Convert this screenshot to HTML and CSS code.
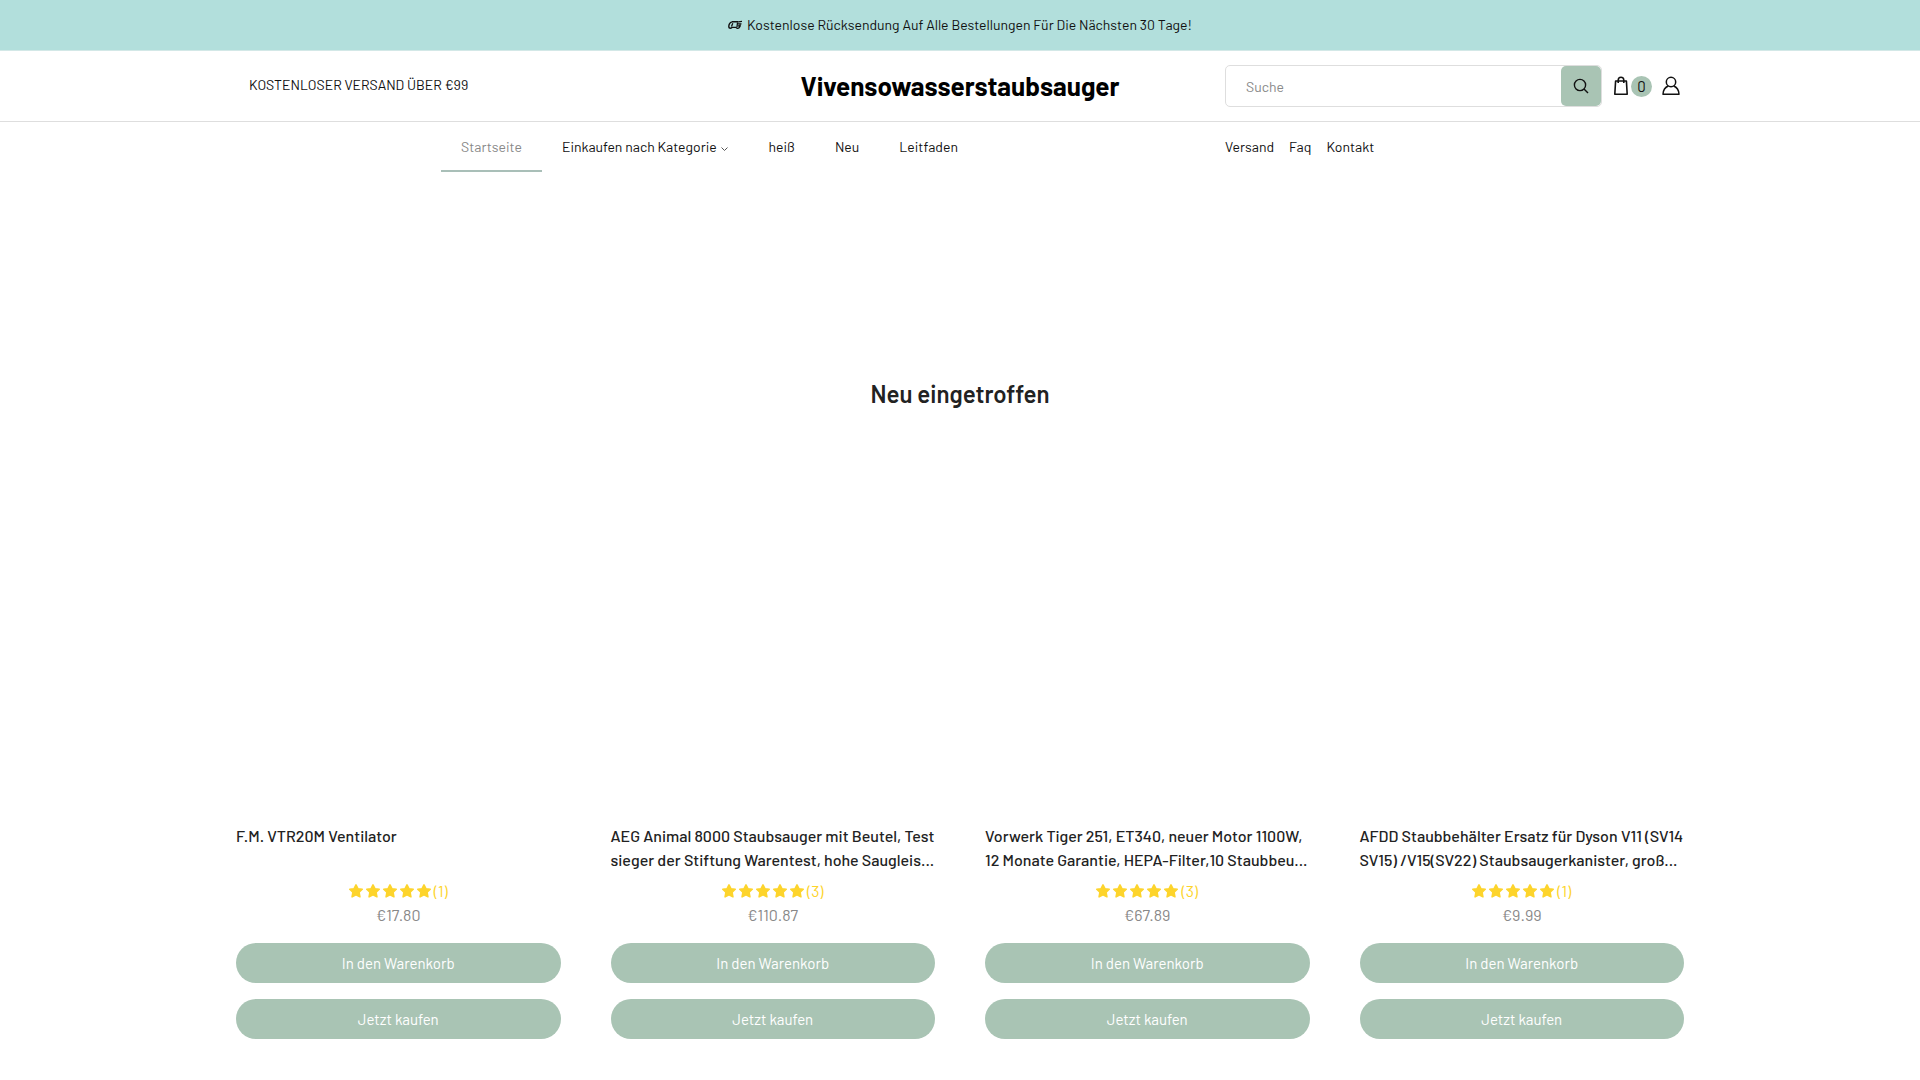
FILE: index.html
```html
<!DOCTYPE html>
<html lang="de">
<head>
    <meta charset="UTF-8">
    <meta name="viewport" content="width=device-width, initial-scale=1.0">
    <title>Vivensowasserstaubsauger</title>
    <link rel="stylesheet" href="styles.css">
</head>
<body>
    <!-- shared icons -->
    <svg class="sprite" aria-hidden="true">
        <symbol id="star" viewBox="0 0 14 14">
            <path d="M7 .9l1.900 3.800 4.300.6-3.100 3 .8 4.500L7 10.900l-3.900 1.900.8-4.500-3.100-3 4.300-.6z" fill="#fdd42c" stroke="#fdd42c" stroke-width="1.600" stroke-linejoin="round"/>
        </symbol>
        <symbol id="stars" viewBox="0 0 82 14">
            <use href="#star" x="0" width="14" height="14"/>
            <use href="#star" x="17" width="14" height="14"/>
            <use href="#star" x="34" width="14" height="14"/>
            <use href="#star" x="51" width="14" height="14"/>
            <use href="#star" x="68" width="14" height="14"/>
        </symbol>
    </svg>

    <div class="announcement">
        <svg width="14" height="10" viewBox="0 0 14 10" fill="none" stroke="#111">
            <path d="M4 1.800h6.500M4 1.800C2 2.500.8 4 .8 6.500c0 1.200.8 1.800 1.800 1.800.7 0 .9-.5 1.400-.9h4c.7 1 2 1.200 2.800.6.8-.8 1.400-2.500 1.400-3.700" stroke-width="1.400"/>
            <path d="M4.800 3.200L3.500 6.500M9.500 2.500l-.5 4.500M10.500 1.800l3.500-.5M10 3.800h3.500M10 5.800h2.500" stroke-width="1.300"/>
        </svg>
        <span>Kostenlose Rücksendung Auf Alle Bestellungen Für Die Nächsten 30 Tage!</span>
    </div>

    <header class="header">
        <div class="container header-row">
            <p class="shipping">KOSTENLOSER VERSAND ÜBER €99</p>
            <a class="logo" href="#">Vivensowasserstaubsauger</a>
            <div class="tools">
                <form class="search">
                    <input type="text" placeholder="Suche" aria-label="Suche">
                    <button type="submit" aria-label="Suchen">
                        <svg width="16" height="16" viewBox="0 0 16 16" fill="none" stroke="#111" stroke-width="1.4">
                            <circle cx="7" cy="7" r="5.600"/>
                            <path d="M11 11l4 4"/>
                        </svg>
                    </button>
                </form>
                <a class="cart" href="#" aria-label="Warenkorb">
                    <svg width="14" height="20" viewBox="0 0 14 20" fill="none" stroke="#111" stroke-width="1.600" stroke-linejoin="round">
                        <path d="M1.600 5h10.800l.8 13.200H.8z"/>
                        <path d="M4.200 7V4.200c0-4 5.600-4 5.600 0V7"/>
                    </svg>
                    <span class="count">0</span>
                </a>
                <a class="account" href="#" aria-label="Konto">
                    <svg width="18" height="20" viewBox="0 0 18 20" fill="none" stroke="#111" stroke-width="1.500" stroke-linejoin="round">
                        <circle cx="9" cy="6" r="4.700"/>
                        <path d="M6.300 10C3 11.300 1.200 14.500 1 18.200h16c-.2-3.700-2-6.900-5.300-8.200"/>
                    </svg>
                </a>
            </div>
        </div>
    </header>

    <div class="container nav-row">
        <nav class="main-nav">
            <a class="active" href="#">Startseite</a>
            <a href="#">Einkaufen nach Kategorie
                <svg width="9" height="6" viewBox="0 0 9 6" fill="none" stroke="#555"><path d="M1.500 1.500l3 3 3-3"/></svg>
            </a>
            <a href="#">heiß</a>
            <a href="#">Neu</a>
            <a href="#">Leitfaden</a>
        </nav>
        <nav class="side-nav">
            <a href="#">Versand</a>
            <a href="#">Faq</a>
            <a href="#">Kontakt</a>
        </nav>
    </div>

    <main class="container">
        <h2>Neu eingetroffen</h2>
        <div class="products">
            <article class="product">
                <div class="photo"></div>
                <h3><a href="#">F.M. VTR20M Ventilator</a></h3>
                <div class="rating"><svg width="82" height="14"><use href="#stars"/></svg><span>(1)</span></div>
                <p class="price">€17.80</p>
                <button type="button">In den Warenkorb</button>
                <button type="button">Jetzt kaufen</button>
            </article>
            <article class="product">
                <div class="photo"></div>
                <h3><a href="#">AEG Animal 8000 Staubsauger mit Beutel, Test<br>sieger der Stiftung Warentest, hohe Saugleis...</a></h3>
                <div class="rating"><svg width="82" height="14"><use href="#stars"/></svg><span>(3)</span></div>
                <p class="price">€110.87</p>
                <button type="button">In den Warenkorb</button>
                <button type="button">Jetzt kaufen</button>
            </article>
            <article class="product">
                <div class="photo"></div>
                <h3><a href="#">Vorwerk Tiger 251, ET340, neuer Motor 1100W,<br>12 Monate Garantie, HEPA-Filter,10 Staubbeu...</a></h3>
                <div class="rating"><svg width="82" height="14"><use href="#stars"/></svg><span>(3)</span></div>
                <p class="price">€67.89</p>
                <button type="button">In den Warenkorb</button>
                <button type="button">Jetzt kaufen</button>
            </article>
            <article class="product">
                <div class="photo"></div>
                <h3><a href="#">AFDD Staubbehälter Ersatz für Dyson V11 (SV14<br>SV15) /V15(SV22) Staubsaugerkanister, groß...</a></h3>
                <div class="rating"><svg width="82" height="14"><use href="#stars"/></svg><span>(1)</span></div>
                <p class="price">€9.99</p>
                <button type="button">In den Warenkorb</button>
                <button type="button">Jetzt kaufen</button>
            </article>
        </div>
    </main>
</body>
</html>
```
FILE: styles.css
```css
* { box-sizing: border-box; }
body { margin: 0; font-family: Barlow, Roboto, sans-serif; font-size: 14px; line-height: 24px; color: #111; background-color: #fff; }
a { color: inherit; text-decoration: none; }
p, h2, h3 { margin: 0; }
button, input { font-family: inherit; }
.sprite { position: absolute; width: 0; height: 0; }
.container { max-width: 1488px; margin: 0 auto; padding: 0 20px; }

.announcement { display: flex; align-items: center; justify-content: center; gap: 5px; padding: 13px 20px; background-color: #b2dfdc; border-bottom: 1px solid #d3e8e7; }

.header { border-bottom: 1px solid #dedede; }
.header-row { display: grid; grid-template-columns: 459px 1fr 459px; align-items: center; padding-top: 14px; padding-bottom: 14px; }
.shipping { padding: 0 0 2px 13px; }
.logo { text-align: center; font-size: 26px; line-height: 40px; font-weight: 700; color: #000; }
.tools { display: flex; align-items: center; }
.search { display: flex; flex: 1; height: 42px; border: 1px solid #dedede; border-radius: 5px; }
.search input { flex: 1; min-width: 0; padding: 0 20px; border: none; background: none; font-size: 14px; outline: none; }
.search input::placeholder { color: #888; }
.search button { display: flex; align-items: center; justify-content: center; width: 40px; padding: 0; border: none; border-radius: 5px; background-color: #a9c4b4; cursor: pointer; }
.cart { display: flex; align-items: center; gap: 3px; margin-left: 12px; }
.count { width: 21px; height: 21px; border-radius: 50%; background-color: #a9c4b4; font-size: 15px; line-height: 20px; text-align: center; }
.account { display: flex; margin: 0 4px 0 10px; }

.nav-row { display: grid; grid-template-columns: 1fr 459px; gap: 42px; }
.main-nav { display: flex; justify-content: center; }
.main-nav a { padding: 13px 20px 11px; border-bottom: 2px solid transparent; }
.main-nav .active { color: #888; border-color: #a9bfb8; }
.main-nav svg { vertical-align: 0; }
.side-nav { display: flex; gap: 15px; padding-top: 13px; }

h2 { padding: 202px 0 20px; font-size: 24px; line-height: 40px; font-weight: 600; text-align: center; color: #222; }
.products { display: grid; grid-template-columns: repeat(4, 1fr); gap: 50px; padding-bottom: 40px; }
.photo { aspect-ratio: 1; margin-bottom: 65px; }
.product { min-width: 0; }
.product h3 { height: 48px; font-size: 16px; line-height: 24px; font-weight: 500; white-space: nowrap; color: #222; }
.rating { display: flex; align-items: center; justify-content: center; gap: 3px; margin-top: 7px; font-size: 16px; line-height: 24px; color: #fdd42c; }
.price { margin-bottom: 16px; font-size: 16px; text-align: center; color: #888; }
.product button { display: block; width: 100%; height: 40px; margin-bottom: 16px; border: none; border-radius: 20px; background-color: #a9c4b4; color: #fff; font-size: 15px; cursor: pointer; }
```
